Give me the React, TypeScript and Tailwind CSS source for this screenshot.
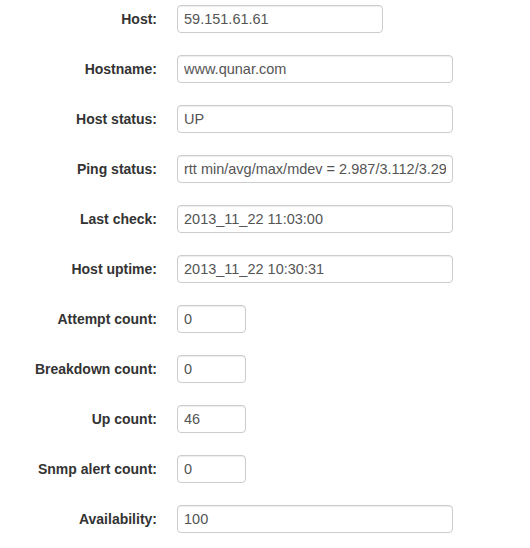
import React from 'react';

type Field = { label: string; value: string; size: 'md' | 'lg' | 'sm' };

const fields: Field[] = [
  { label: 'Host:', value: '59.151.61.61', size: 'md' },
  { label: 'Hostname:', value: 'www.qunar.com', size: 'lg' },
  { label: 'Host status:', value: 'UP', size: 'lg' },
  { label: 'Ping status:', value: 'rtt min/avg/max/mdev = 2.987/3.112/3.290/0.126 ms', size: 'lg' },
  { label: 'Last check:', value: '2013_11_22 11:03:00', size: 'lg' },
  { label: 'Host uptime:', value: '2013_11_22 10:30:31', size: 'lg' },
  { label: 'Attempt count:', value: '0', size: 'sm' },
  { label: 'Breakdown count:', value: '0', size: 'sm' },
  { label: 'Up count:', value: '46', size: 'sm' },
  { label: 'Snmp alert count:', value: '0', size: 'sm' },
  { label: 'Availability:', value: '100', size: 'lg' },
];

const widths = {
  sm: 'w-[69px]',
  md: 'w-[206px]',
  lg: 'w-[276px]',
};

export default function App() {
  return (
    <div
      className="w-[530px] h-[548px] bg-white pt-[5px] flex flex-col gap-[22px]"
      style={{ fontFamily: '"Liberation Sans", Arial, sans-serif' }}
    >
      {fields.map((f) => (
        <div key={f.label} className="flex items-center h-[28px]">
          <label className="w-[157px] text-right text-[14px] font-bold text-[#333] shrink-0">
            {f.label}
          </label>
          <input
            readOnly
            value={f.value}
            className={`${widths[f.size]} ml-[20px] h-[28px] px-[6px] border border-[#ccc] rounded-[4px] text-[14.5px] text-[#555] bg-white shadow-[inset_0_1px_1px_rgba(0,0,0,0.075)] outline-none`}
          />
        </div>
      ))}
    </div>
  );
}
